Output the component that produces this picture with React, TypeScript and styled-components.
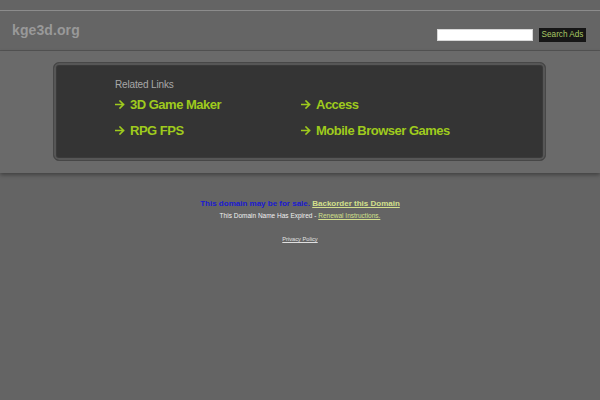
import React from "react";
import styled, { createGlobalStyle } from "styled-components";

const Global = createGlobalStyle`
  html, body { margin: 0; padding: 0; }
  body {
    background: #646464;
    font-family: "Liberation Sans", Arial, sans-serif;
    width: 600px;
    height: 400px;
    overflow: hidden;
  }
`;

const Page = styled.div`
  padding-top: 10px;
`;

const Header = styled.header`
  height: 39px;
  border-top: 1px solid #8c8c8c;
  border-bottom: 1px solid #545454;
  background: #656565;
  display: flex;
  align-items: center;
  justify-content: space-between;
  padding: 0 14px 0 12px;
`;

const Logo = styled.div`
  font-size: 14px;
  font-weight: bold;
  color: #999999;
  letter-spacing: 0.1px;
  margin-top: -2px;
`;

const SearchForm = styled.form`
  display: flex;
  align-items: center;
  gap: 6px;
  margin: 8px 0 0;
`;

const SearchInput = styled.input`
  width: 94px;
  height: 10px;
  border: 1px solid #d8d8d8;
  background: #ffffff;
  padding: 0;
  margin: 0;
  outline: none;
`;

const SearchButton = styled.button`
  height: 14px;
  width: 47px;
  padding: 0;
  margin: 0;
  border: none;
  background: #161616;
  color: #a9c865;
  font-family: "Liberation Sans", Arial, sans-serif;
  font-size: 8.2px;
  line-height: 14px;
  cursor: pointer;
`;

const Band = styled.section`
  background: #6a6a6a;
  padding: 11px 54px 12px 53px;
  box-shadow: 0 2px 4px rgba(0, 0, 0, 0.35);
  position: relative;
`;

const Panel = styled.div`
  height: 99px;
  box-sizing: border-box;
  background: #343434;
  border: 1px solid #474747;
  border-radius: 6px;
  box-shadow: inset 0 0 0 2px #565656, inset 0 0 0 3px #3a3a3a;
  padding: 16px 0 0 61px;
`;

const PanelTitle = styled.div`
  font-size: 10px;
  line-height: 12px;
  color: #a8a8a8;
  letter-spacing: -0.15px;
  margin-bottom: 4px;
`;

const LinkGrid = styled.div`
  display: grid;
  grid-template-columns: 186px 186px;
  row-gap: 8px;
`;

const LinkItem = styled.a`
  display: flex;
  align-items: center;
  gap: 5px;
  height: 18px;
  color: #9fcb1d;
  font-size: 13px;
  font-weight: bold;
  letter-spacing: -0.5px;
  text-decoration: none;
`;

const Arrow = () => (
  <svg width="10" height="9" viewBox="0 0 10 9" fill="none">
    <path
      d="M0.5 4.5H8.5M5 1L8.6 4.5L5 8"
      stroke="#9fcb1d"
      strokeWidth="1.6"
      strokeLinecap="square"
    />
  </svg>
);

const Footer = styled.footer`
  margin-top: 26px;
  text-align: center;
`;

const SaleLine = styled.div`
  font-size: 8px;
  font-weight: bold;
  line-height: 10px;
  color: #1a1ad0;
`;

const SaleLink = styled.a`
  color: #d3e08c;
  text-decoration: underline;
`;

const ExpiredLine = styled.div`
  margin-top: 3px;
  font-size: 6.5px;
  line-height: 8px;
  color: #f0f0f0;
`;

const ExpiredLink = styled.a`
  color: #d3e08c;
  text-decoration: underline;
`;

const Privacy = styled.a`
  display: inline-block;
  margin-top: 15px;
  font-size: 5.7px;
  line-height: 8px;
  color: #e0e0e0;
  text-decoration: underline;
`;

const links = ["3D Game Maker", "Access", "RPG FPS", "Mobile Browser Games"];

export default function App() {
  return (
    <>
      <Global />
      <Page>
        <Header>
          <Logo>kge3d.org</Logo>
          <SearchForm onSubmit={(e) => e.preventDefault()}>
            <SearchInput type="text" />
            <SearchButton type="submit">Search Ads</SearchButton>
          </SearchForm>
        </Header>
        <Band>
          <Panel>
            <PanelTitle>Related Links</PanelTitle>
            <LinkGrid>
              {links.map((l) => (
                <LinkItem key={l} href="#">
                  <Arrow />
                  {l}
                </LinkItem>
              ))}
            </LinkGrid>
          </Panel>
        </Band>
        <Footer>
          <SaleLine>
            This domain may be for sale. <SaleLink href="#">Backorder this Domain</SaleLink>
          </SaleLine>
          <ExpiredLine>
            This Domain Name Has Expired - <ExpiredLink href="#">Renewal Instructions.</ExpiredLink>
          </ExpiredLine>
          <Privacy href="#">Privacy Policy</Privacy>
        </Footer>
      </Page>
    </>
  );
}
